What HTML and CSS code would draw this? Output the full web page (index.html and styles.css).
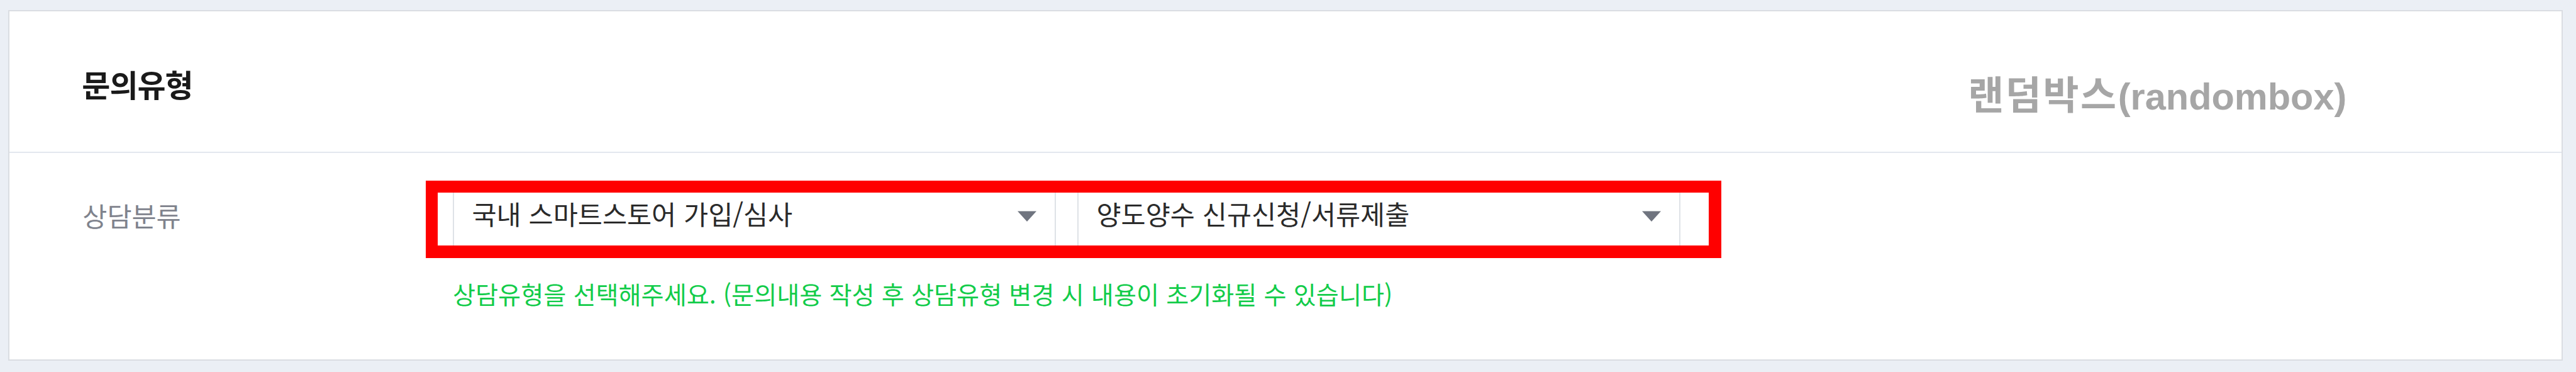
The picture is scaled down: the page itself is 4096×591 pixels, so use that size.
FILE: index.html
```
<!DOCTYPE html>
<html lang="ko">
<head>
<meta charset="utf-8">
<title>문의유형</title>
<link rel="stylesheet" href="styles.css">
</head>
<body>
<section class="card">
  <header class="card-header">
    <h2 class="title">문의유형</h2>
    <div class="watermark"><span class="watermark-ko">랜덤박스</span>(randombox)</div>
  </header>
  <div class="row">
    <div class="label">상담분류</div>
    <div class="field">
      <div class="selects">
        <div class="select">
          <span>국내 스마트스토어 가입/심사</span>
          <svg class="arrow" viewBox="0 0 30 17"><path d="M0 0.5H30L15 17Z"/></svg>
        </div>
        <div class="select">
          <span>양도양수 신규신청/서류제출</span>
          <svg class="arrow" viewBox="0 0 30 17"><path d="M0 0.5H30L15 17Z"/></svg>
        </div>
        <div class="highlight"></div>
      </div>
      <p class="hint">상담유형을 선택해주세요. (문의내용 작성 후 상담유형 변경 시 내용이 초기화될 수 있습니다)</p>
    </div>
  </div>
</section>
</body>
</html>
```
FILE: styles.css
```
* {
  box-sizing: border-box;
}

body {
  margin: 0;
  height: 591px;
  padding: 16px 21px 18px 13px;
  background: #ebeff5;
  font-family: "Noto Sans CJK KR", sans-serif;
  white-space: nowrap;
  overflow: hidden;
}

.card {
  height: 557px;
  border: 2px solid #dadde2;
  background: #fff;
}

.card-header {
  position: relative;
  height: 225px;
  padding: 85px 0 0 115.3px;
  border-bottom: 2px solid #e3e7ee;
}

.title {
  margin: 0;
  font-size: 49px;
  font-weight: 700;
  line-height: 60px;
  letter-spacing: -1px;
  color: #1a1a1a;
}

.watermark {
  position: absolute;
  top: 95.5px;
  left: 3114.2px;
  font: 700 59.5px/80px "Liberation Sans", sans-serif;
  color: #a6a6a6;
}

.watermark-ko {
  font-family: "Noto Sans CJK KR", sans-serif;
  font-size: 62px;
  line-height: 0;
  letter-spacing: 2.6px;
}

.row {
  display: flex;
  padding: 47px 0 0 116.3px;
}

.label {
  width: 588.7px;
  padding-top: 22px;
  font-size: 42.5px;
  line-height: 60px;
  color: #7f838d;
}

.selects {
  position: relative;
  display: flex;
  gap: 34px;
}

.select {
  display: flex;
  align-items: center;
  justify-content: space-between;
  width: 959px;
  height: 110px;
  padding: 0 29px 12px 28.5px;
  border: 2px solid #dee2e7;
  font-size: 42.5px;
  line-height: 60px;
  color: #2a2a2a;
}

.arrow {
  width: 30px;
  height: 17px;
  margin-top: 9px;
  fill: #6f747f;
}

.highlight {
  position: absolute;
  top: -3px;
  left: -43px;
  width: 2060px;
  height: 123px;
  border: solid #f00;
  border-width: 19px 20px 20px 19px;
}

.hint {
  margin: 36px 0 0;
  font-size: 39.2px;
  line-height: 60px;
  word-spacing: 0.2px;
  color: #12cc4a;
}
```
